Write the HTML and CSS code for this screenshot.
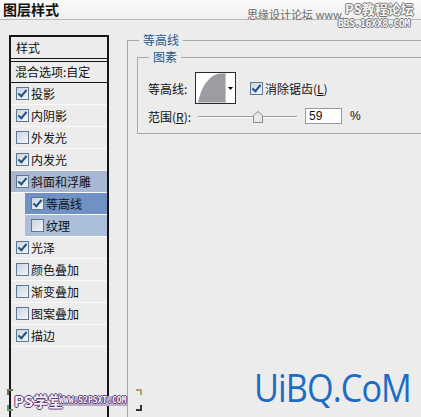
FILE: index.html
```html
<!DOCTYPE html>
<html lang="zh-CN">
<head>
<meta charset="UTF-8">
<title>图层样式</title>
<link rel="stylesheet" href="styles.css">
</head>
<body>
<div class="dialog">
  <div class="titlebar">图层样式</div>

  <div class="mark-top">
    <span class="mark-site">思缘设计论坛 www.</span>
    <span class="mark-ps">PS教程论坛</span>
    <span class="mark-bbs">BBS.16XX8.COM</span>
  </div>

  <div class="main">
    <div class="styles-list">
      <div class="list-head">样式</div>
      <div class="list-blend">混合选项:自定</div>
      <div class="item"><span class="cb on"></span>投影</div>
      <div class="item"><span class="cb on"></span>内阴影</div>
      <div class="item"><span class="cb"></span>外发光</div>
      <div class="item"><span class="cb on"></span>内发光</div>
      <div class="item parent-sel"><span class="cb on"></span>斜面和浮雕</div>
      <div class="item sub active"><span class="cb on"></span>等高线</div>
      <div class="item sub sub-sel"><span class="cb"></span>纹理</div>
      <div class="item"><span class="cb on"></span>光泽</div>
      <div class="item"><span class="cb"></span>颜色叠加</div>
      <div class="item"><span class="cb"></span>渐变叠加</div>
      <div class="item"><span class="cb"></span>图案叠加</div>
      <div class="item"><span class="cb on"></span>描边</div>
    </div>

    <div class="options">
      <fieldset class="group">
        <legend>等高线</legend>
        <fieldset class="group inner">
          <legend>图素</legend>
          <div class="row">
            <span class="label">等高线:</span>
            <div class="contour">
              <svg width="30" height="30" viewBox="0 0 30 30">
                <path d="M2 30 C 5 15, 12 3, 23 0 L 30 0 L 30 30 Z" fill="#9d9ca2"/>
              </svg>
              <div class="contour-drop">
                <svg width="5" height="3" viewBox="0 0 5 3"><path d="M0 0 H5 L2.5 3 Z" fill="#000"/></svg>
              </div>
            </div>
            <span class="cb on"></span>
            <span class="check-label">消除锯齿(<u>L</u>)</span>
          </div>
          <div class="row range">
            <span class="label">范围(<u>R</u>):</span>
            <div class="slider">
              <div class="track"></div>
              <svg class="thumb" width="10" height="12" viewBox="0 0 10 12">
                <path d="M0.5 11.5 V4.5 L5 0.5 L9.5 4.5 V11.5 Z" fill="#e9e9e9" stroke="#8a8a8a"/>
              </svg>
            </div>
            <div class="num">59</div>
            <span class="unit">%</span>
          </div>
        </fieldset>
      </fieldset>
    </div>
  </div>

  <div class="mark-bottom">
    <span class="corner c1"></span><span class="corner c2"></span>
    <span class="corner c3"></span><span class="corner c4"></span>
    <span class="mark-xt">PS学堂</span>
    <span class="mark-url">WWW.52PSXT.COM</span>
  </div>

  <div class="uibq">UiBQ.CoM</div>
</div>
</body>
</html>
```

FILE: styles.css
```css
body {
  margin: 0;
  background-color: #ececec;
  font-family: "Noto Sans CJK SC", "Liberation Sans", sans-serif;
  font-size: 12px;
  color: #111;
  overflow: hidden;
}
.dialog {
  position: relative;
  width: 421px;
  height: 417px;
  overflow: hidden;
}
.titlebar {
  height: 20px;
  line-height: 19px;
  padding-left: 3px;
  font-size: 14px;
  font-weight: bold;
  background: linear-gradient(#fbfbfb, #efefef);
  border-bottom: 1px solid #b9b9b9;
  box-sizing: border-box;
}
.main {
  display: flex;
  padding: 15px 0 0 9px;
  height: 396px;
  box-sizing: border-box;
}

/* left list */
.styles-list {
  width: 100px;
  height: 400px;
  box-sizing: border-box;
  border: 2px solid #161616;
  border-bottom: none;
  flex-shrink: 0;
}
.list-head {
  height: 21px;
  line-height: 21px;
  padding-left: 5px;
  border-bottom: 4px double #161616;
}
.list-blend {
  height: 20px;
  line-height: 20px;
  padding-left: 4px;
  border-bottom: 1px solid #161616;
}
.item {
  display: flex;
  align-items: center;
  height: 21px;
  padding-left: 5px;
  border-bottom: 1px solid #fafafa;
}
.item .cb {
  margin-right: 2px;
}
.item.sub {
  margin-left: 14px;
  padding-left: 6px;
}
.parent-sel {
  background-color: #a8b8d2;
}
.active {
  background-color: #6f91c3;
}
.sub-sel {
  background-color: #abbed9;
}

/* checkbox */
.cb {
  display: inline-block;
  width: 11px;
  height: 11px;
  border: 1px solid #5d7893;
  background: linear-gradient(135deg, #c9d3de, #f4f6f8);
  flex-shrink: 0;
  position: relative;
}
.cb.on::after {
  content: "";
  position: absolute;
  left: 3px;
  top: 0px;
  width: 3px;
  height: 7px;
  border: solid #24508a;
  border-width: 0 2px 2px 0;
  transform: rotate(40deg);
}

/* right options */
.options {
  margin-left: 18px;
  flex: 1;
}
.group {
  margin: -2px 0 0 0;
  padding: 3px 0 0 9px;
  border: 1px solid #a8a8a8;
  border-right: none;
  border-bottom: none;
  min-height: 420px;
  box-sizing: border-box;
  width: 320px;
}
.group legend {
  padding: 0 4px;
  margin-left: 2px;
  color: #1d5a8e;
  font-size: 12px;
  line-height: 14px;
}
.group.inner {
  margin: 0;
  min-height: 0;
  border-bottom: 1px solid #a8a8a8;
  padding: 8px 0 9px 10px;
  width: 320px;
}
.group.inner legend {
  margin-left: 1px;
}
.row {
  display: flex;
  align-items: center;
  height: 32px;
}
.label {
  width: 47px;
  flex-shrink: 0;
}
.contour {
  display: flex;
  width: 41px;
  height: 32px;
  border: 1px solid #2b2b2b;
  box-sizing: border-box;
  background-color: #fff;
  margin-right: 14px;
}
.contour svg {
  display: block;
}
.contour-drop {
  width: 9px;
  border-left: 1px solid #c8c8c8;
  display: flex;
  align-items: center;
  justify-content: center;
}
.check-label {
  margin-left: 2px;
}
.row.range {
  height: 16px;
  margin-top: 4px;
}
.slider {
  position: relative;
  width: 99px;
  height: 16px;
  margin-left: 3px;
}
.track {
  position: absolute;
  left: 0;
  right: 0;
  top: 8px;
  height: 1px;
  background-color: #9b9b9b;
  border-bottom: 1px solid #fff;
}
.thumb {
  position: absolute;
  left: 55px;
  top: 3px;
}
.num {
  width: 37px;
  height: 16px;
  box-sizing: border-box;
  border: 1px solid #9a9a9a;
  background-color: #fff;
  margin-left: 8px;
  padding-left: 3px;
  line-height: 14px;
  font-family: "Liberation Sans", sans-serif;
}
.unit {
  margin-left: 8px;
  font-family: "Liberation Sans", sans-serif;
}

/* watermarks */
.mark-top {
  position: absolute;
  top: 2px;
  left: 247px;
  width: 174px;
  height: 28px;
}
.mark-site {
  position: absolute;
  top: 6px;
  left: 0;
  color: #6a6a6a;
  font-size: 11px;
  line-height: 13px;
  white-space: nowrap;
}
.mark-ps {
  position: absolute;
  top: 0;
  left: 98px;
  font-size: 13px;
  line-height: 14px;
  font-weight: bold;
  color: #f4f4f4;
  text-shadow: 1px 0 #777, -1px 0 #777, 0 1px #777, 0 -1px #777;
  white-space: nowrap;
}
.mark-bbs {
  position: absolute;
  top: 17px;
  left: 91px;
  font-family: "DejaVu Sans Mono", monospace;
  font-size: 10px;
  line-height: 10px;
  letter-spacing: -0.5px;
  font-weight: bold;
  color: #f4f4f4;
  text-shadow: 1px 0 #777, -1px 0 #777, 0 1px #777, 0 -1px #777;
  white-space: nowrap;
}
.mark-bottom {
  position: absolute;
  left: 7px;
  top: 389px;
  width: 135px;
  height: 22px;
}
.corner {
  position: absolute;
  width: 4px;
  height: 4px;
  border: 0 solid #6a7a4a;
}
.c1 { left: 0; top: 0; border-width: 2px 0 0 2px; }
.c2 { right: 0; top: 0; border-width: 2px 2px 0 0; border-color: #b4a265; }
.c3 { left: 0; bottom: 0; border-width: 0 0 2px 2px; border-color: #5f9a6a; }
.c4 { right: 0; bottom: 0; border-width: 0 2px 2px 0; border-color: #333; }
.mark-xt {
  position: absolute;
  left: 7px;
  top: 4px;
  font-size: 15px;
  line-height: 15px;
  font-weight: bold;
  color: #f6f2f8;
  text-shadow: 1px 0 #5b3c78, -1px 0 #5b3c78, 0 1px #5b3c78, 0 -1px #5b3c78;
}
.mark-url {
  position: absolute;
  left: 51px;
  top: 7px;
  font-family: "DejaVu Sans Mono", monospace;
  font-size: 8px;
  line-height: 10px;
  font-weight: bold;
  color: #f6f2f8;
  background-color: #b9aec8;
  padding: 0 1px;
  text-shadow: 1px 0 #5b3c78, -1px 0 #5b3c78, 0 1px #5b3c78, 0 -1px #5b3c78;
}
.uibq {
  position: absolute;
  left: 254px;
  top: 361px;
  font-family: "Open Sans", sans-serif;
  font-size: 38px;
  letter-spacing: -1px;
  color: #1c6cc6;
  line-height: 52px;
  transform: scaleX(0.9);
  transform-origin: left center;
}
```
